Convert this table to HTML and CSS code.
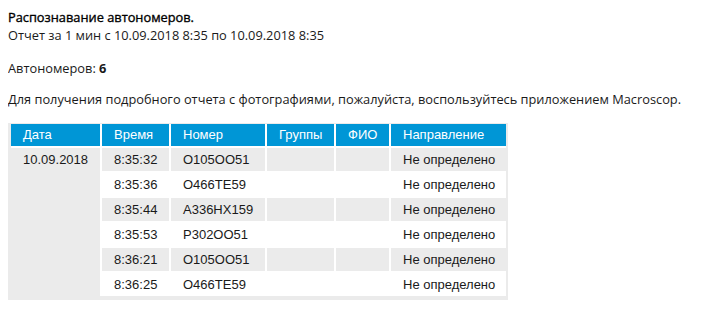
FILE: index.html
```html
<!DOCTYPE html>
<html lang="ru">
<head>
<meta charset="utf-8">
<title>Распознавание автономеров</title>
<link rel="stylesheet" href="styles.css">
</head>
<body>
<div class="intro">
  <div class="title">Распознавание автономеров.</div>
  <div>Отчет за 1 мин с 10.09.2018 8:35 по 10.09.2018 8:35</div>
</div>
<div class="count">Автономеров: <b>6</b></div>
<div class="note">Для получения подробного отчета с фотографиями, пожалуйста, воспользуйтесь приложением Macroscop.</div>
<div class="table-wrap">
  <table class="report">
    <thead>
      <tr>
        <th class="c-date">Дата</th>
        <th class="c-time">Время</th>
        <th class="c-num">Номер</th>
        <th class="c-group">Группы</th>
        <th class="c-fio">ФИО</th>
        <th class="c-dir">Направление</th>
      </tr>
    </thead>
    <tbody>
      <tr class="odd">
        <td class="date-cell" rowspan="6">10.09.2018</td>
        <td>8:35:32</td><td>O105OO51</td><td></td><td></td><td>Не определено</td>
      </tr>
      <tr class="even">
        <td>8:35:36</td><td>O466TE59</td><td></td><td></td><td>Не определено</td>
      </tr>
      <tr class="odd">
        <td>8:35:44</td><td>A336HX159</td><td></td><td></td><td>Не определено</td>
      </tr>
      <tr class="even">
        <td>8:35:53</td><td>P302OO51</td><td></td><td></td><td>Не определено</td>
      </tr>
      <tr class="odd">
        <td>8:36:21</td><td>O105OO51</td><td></td><td></td><td>Не определено</td>
      </tr>
      <tr class="even last">
        <td>8:36:25</td><td>O466TE59</td><td></td><td></td><td>Не определено</td>
      </tr>
    </tbody>
  </table>
</div>
</body>
</html>
```
FILE: styles.css
```css
html, body {
  background: #ffffff;
}
body {
  margin: 8px;
  font-family: "Open Sans", "Liberation Sans", sans-serif;
  font-size: 12.8px;
  line-height: 18px;
  color: #1a1a1a;
}
.title {
  color: #000;
  -webkit-text-stroke: 0.35px #000;
}
.count {
  margin-top: 15px;
}
.count b {
  font-weight: 700;
}
.note {
  margin-top: 13px;
}
.table-wrap {
  display: inline-block;
  margin-top: 15px;
  background: #ebebeb;
  padding: 1px 2px 4px 3px;
}
.report {
  border-collapse: separate;
  border-spacing: 0;
  table-layout: fixed;
  width: 495px;
  font-family: "Liberation Sans", Arial, sans-serif;
  font-size: 13px;
  color: #1a1a1a;
}
.report th,
.report td {
  box-sizing: border-box;
  padding: 0 0 0 12px;
  text-align: left;
  white-space: nowrap;
  border-right: 2px solid #ffffff;
  border-bottom: 2px solid #ffffff;
  vertical-align: middle;
}
.report th {
  background: #0096d6;
  color: #ffffff;
  font-weight: 400;
  height: 24px;
  line-height: 22px;
}
.report td {
  height: 25px;
  line-height: 23px;
}
.report tr > :last-child {
  border-right: none;
}
.report .c-date { width: 91px; }
.report .c-time { width: 69px; }
.report .c-num { width: 96px; }
.report .c-group { width: 69px; }
.report .c-fio { width: 55px; }
.report .c-dir { width: 115px; }
.report tr.odd td {
  background: #ebebeb;
}
.report tr.even td {
  background: #ffffff;
}
.report td.date-cell {
  background: #ebebeb;
  border-bottom: none;
  vertical-align: top;
}
.report tr.last td {
  border-bottom: none;
  height: 23px;
}
```
